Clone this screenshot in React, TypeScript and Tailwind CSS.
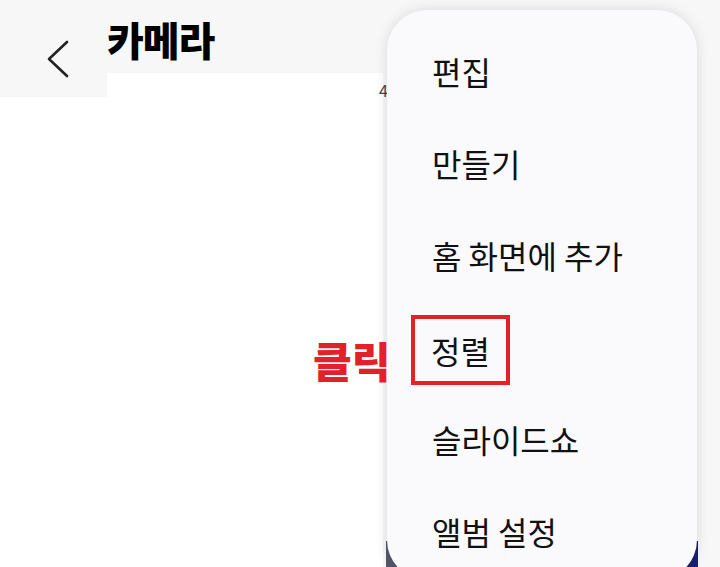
const ITEMS = ["편집", "만들기", "홈 화면에 추가", "정렬", "슬라이드쇼", "앨범 설정"];

export default function App() {
  return (
    <div
      className="relative h-[567px] w-[720px] overflow-hidden bg-[#f7f7f7] text-black"
      style={{ fontFamily: '"Noto Sans CJK KR", "Noto Sans", sans-serif' }}
    >
      {/* Header */}
      <div className="flex h-[73px] items-start">
        <div className="flex h-[97px] w-[107px] shrink-0 items-start pl-[46px] pt-[40px]">
          <svg width="26" height="38" viewBox="0 0 26 38" fill="none">
            <path d="M21 2 L3 19 L21 36" stroke="#222" strokeWidth="2.6" strokeLinecap="round" strokeLinejoin="round" />
          </svg>
        </div>
        <h1 className="pt-[12px] text-[40px] font-black leading-[54px] tracking-tight">카메라</h1>
      </div>

      {/* Page body (white) */}
      <div className="ml-[107px] h-[24px] w-[276px] bg-white" />
      <div className="h-[470px] w-[383px] bg-white" />

      {/* Stuff peeking behind the menu bottom */}
      <div className="absolute bottom-0 left-[386px] h-[26px] w-[312px] bg-gradient-to-r from-[#55586a] via-[#2a2f6a] to-[#1a2070]" />
      <span className="absolute left-[379px] top-[78px] text-[16px] text-[#444]">4</span>

      {/* Popup menu */}
      <div className="absolute left-[387px] top-[10px] h-[570px] w-[310px] rounded-[40px] bg-[#fafafc] pt-[15px] shadow-[0_0_14px_rgba(0,0,0,0.12)]">
        {ITEMS.map((label) => (
          <div key={label} className="flex h-[92px] items-center pl-[45px] text-[32px] leading-none text-[#111]">
            {label === "정렬" ? (
              <span className="-ml-[21px] mt-[6px] flex h-[70px] w-[99px] items-center justify-center border-[4px] border-[#e3212b]">
                {label}
              </span>
            ) : (
              label
            )}
          </div>
        ))}
      </div>

      {/* Annotation */}
      <span className="absolute left-[313px] top-[330px] text-[42px] font-black leading-[60px] text-[#e3212b]">클릭</span>
    </div>
  );
}
